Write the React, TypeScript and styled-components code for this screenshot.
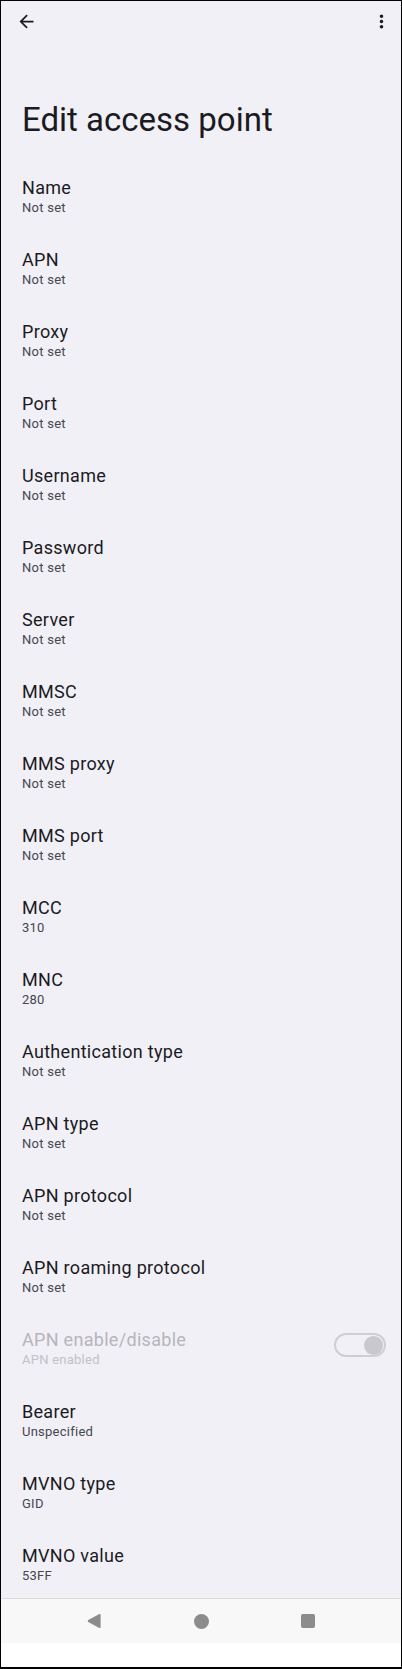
import * as React from 'react'
import styled, { createGlobalStyle } from 'styled-components'

interface Field {
  title: string
  value: string
  disabled?: boolean
  toggle?: boolean
}

const fields: Field[] = [
  { title: 'Name', value: 'Not set' },
  { title: 'APN', value: 'Not set' },
  { title: 'Proxy', value: 'Not set' },
  { title: 'Port', value: 'Not set' },
  { title: 'Username', value: 'Not set' },
  { title: 'Password', value: 'Not set' },
  { title: 'Server', value: 'Not set' },
  { title: 'MMSC', value: 'Not set' },
  { title: 'MMS proxy', value: 'Not set' },
  { title: 'MMS port', value: 'Not set' },
  { title: 'MCC', value: '310' },
  { title: 'MNC', value: '280' },
  { title: 'Authentication type', value: 'Not set' },
  { title: 'APN type', value: 'Not set' },
  { title: 'APN protocol', value: 'Not set' },
  { title: 'APN roaming protocol', value: 'Not set' },
  { title: 'APN enable/disable', value: 'APN enabled', disabled: true, toggle: true },
  { title: 'Bearer', value: 'Unspecified' },
  { title: 'MVNO type', value: 'GID' },
  { title: 'MVNO value', value: '53FF' },
]

const App: React.FC = () => (
  <>
    <GlobalStyle />
    <Frame>
      <Scroll>
        <Toolbar>
          <IconButton aria-label="Back">
            <svg width="21" height="21" viewBox="0 0 24 24">
              <path d="M20 11H7.83l5.59-5.59L12 4l-8 8 8 8 1.41-1.41L7.83 13H20v-2z" fill="currentColor" />
            </svg>
          </IconButton>
          <IconButton aria-label="More options">
            <svg width="21" height="21" viewBox="0 0 24 24">
              <path
                d="M12 8c1.1 0 2-.9 2-2s-.9-2-2-2-2 .9-2 2 .9 2 2 2zm0 2c-1.1 0-2 .9-2 2s.9 2 2 2 2-.9 2-2-.9-2-2-2zm0 6c-1.1 0-2 .9-2 2s.9 2 2 2 2-.9 2-2-.9-2-2-2z"
                fill="currentColor"
              />
            </svg>
          </IconButton>
        </Toolbar>

        <Heading>Edit access point</Heading>

        {fields.map((f) => (
          <Row key={f.title}>
            <Texts>
              <RowTitle $disabled={f.disabled}>{f.title}</RowTitle>
              <RowValue $disabled={f.disabled}>{f.value}</RowValue>
            </Texts>
            {f.toggle && (
              <Track>
                <Thumb />
              </Track>
            )}
          </Row>
        ))}
      </Scroll>

      <Bottom>
        <NavBar>
          <NavCell>
            <svg width="14" height="16" viewBox="0 0 14 16">
              <path
                d="M12.4 1.1 L1.2 7.1 Q0.2 8 1.2 8.9 L12.4 14.9 Q13.6 15.5 13.6 14.2 V1.8 Q13.6 0.5 12.4 1.1 Z"
                fill="currentColor"
              />
            </svg>
          </NavCell>
          <NavCell>
            <Dot />
          </NavCell>
          <NavCell>
            <Square />
          </NavCell>
        </NavBar>
        <Gesture />
      </Bottom>
    </Frame>
  </>
)

export default App

// Styles
const GlobalStyle = createGlobalStyle`
  html, body {
    margin: 0;
    padding: 0;
    background: #ffffff;
  }
  body {
    font-family: Roboto, "Noto Sans", "Liberation Sans", sans-serif;
    -webkit-font-smoothing: antialiased;
  }
`

const Frame = styled.div`
  width: 402px;
  height: 1669px;
  box-sizing: border-box;
  border: 1px solid #000;
  border-bottom-width: 2px;
  background: #f1f0f6;
  display: flex;
  flex-direction: column;
  overflow: hidden;
`

const Scroll = styled.div`
  flex: 1;
  min-height: 0;
  overflow: hidden;
`

const Toolbar = styled.div`
  height: 40px;
  display: flex;
  align-items: center;
  justify-content: space-between;
  padding: 0 9px 0 15px;
`

const IconButton = styled.div`
  width: 21px;
  height: 21px;
  display: flex;
  color: #1b1b1f;
`

const Heading = styled.h1`
  margin: 57px 0 19px;
  padding: 0 21px;
  font-size: 33px;
  line-height: 44px;
  font-weight: 400;
  color: #1b1b1f;
`

const Row = styled.div`
  height: 72px;
  box-sizing: border-box;
  display: flex;
  align-items: flex-start;
  padding: 16px 15px 16px 21px;
`

const Texts = styled.div`
  flex: 1;
  min-width: 0;
`

const RowTitle = styled.div<{ $disabled?: boolean }>`
  font-size: 18px;
  line-height: 22px;
  letter-spacing: 0.3px;
  color: ${(p) => (p.$disabled ? '#b6b5bb' : '#1b1b1f')};
`

const RowValue = styled.div<{ $disabled?: boolean }>`
  font-size: 13px;
  line-height: 18px;
  letter-spacing: 0.25px;
  color: ${(p) => (p.$disabled ? '#c2c1c7' : '#46464f')};
`

const Track = styled.div`
  margin-top: 4px;
  width: 52px;
  height: 24px;
  box-sizing: border-box;
  border: 2px solid #cfced4;
  border-radius: 12px;
  display: flex;
  align-items: center;
  justify-content: flex-end;
  padding-right: 1px;
`

const Thumb = styled.div`
  width: 19px;
  height: 19px;
  border-radius: 50%;
  background: #c9c8ce;
`

const Bottom = styled.div`
  flex: none;
  border-top: 1px solid #dadada;
`

const NavBar = styled.div`
  height: 44px;
  background: #f8f8f8;
  display: flex;
  align-items: center;
  justify-content: center;
  color: #8c8c8c;
`

const NavCell = styled.div`
  width: 107px;
  display: flex;
  align-items: center;
  justify-content: center;
`

const Dot = styled.div`
  width: 15px;
  height: 15px;
  border-radius: 50%;
  background: #8c8c8c;
`

const Square = styled.div`
  width: 14px;
  height: 14px;
  border-radius: 2px;
  background: #8c8c8c;
`

const Gesture = styled.div`
  height: 24px;
  background: #ffffff;
`
